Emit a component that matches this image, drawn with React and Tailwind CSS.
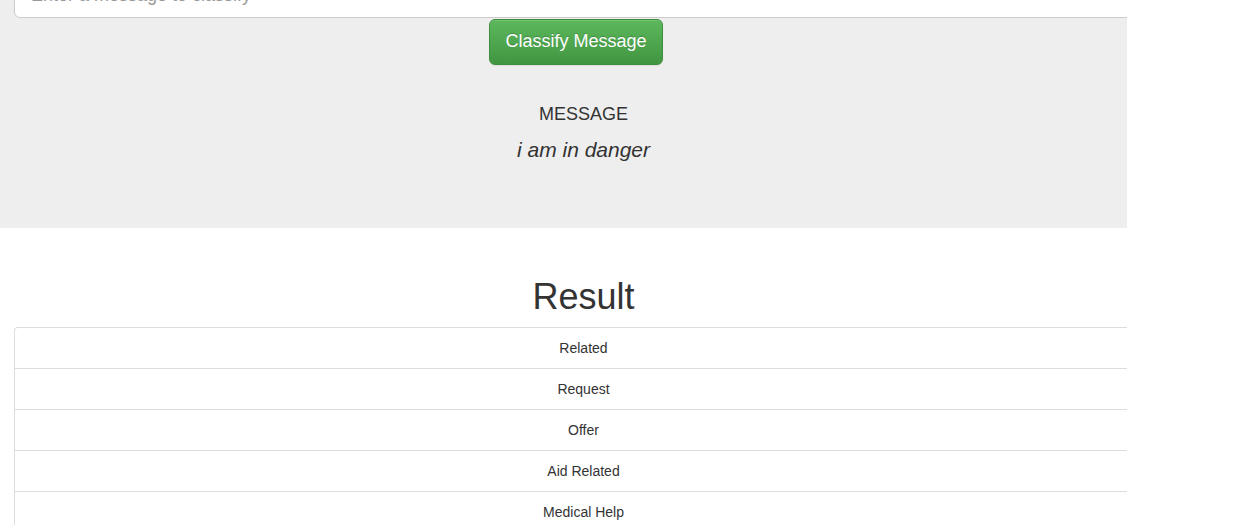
import React from "react";

const categories = ["Related", "Request", "Offer", "Aid Related", "Medical Help"];

export default function App() {
	return (
		<div className="w-[1127px] h-[525px] overflow-hidden bg-white text-[#333] font-['Liberation_Sans',Arial,sans-serif]">
			{/* Jumbotron */}
			<div className="flow-root bg-[#eeeeee] h-[228px]">
				<div className="ml-[14px] w-[1139px] -mt-[28px]">
					<input
						type="text"
						placeholder="Enter a message to classify"
						className="block w-full h-[46px] px-4 text-[18px] rounded-[6px] border border-[#ccc] bg-white shadow-[inset_0_1px_1px_rgba(0,0,0,0.075)] placeholder:text-[#999] outline-none"
					/>
					<div className="pl-[475px] pt-px">
						<button className="h-[46px] w-[174px] rounded-[6px] border border-[#3e8f3e] bg-[linear-gradient(to_bottom,#5cb85c_0%,#419641_100%)] text-white text-[18px] leading-[1.33] [text-shadow:0_-1px_0_rgba(0,0,0,0.2)] shadow-[inset_0_1px_0_rgba(255,255,255,0.15),0_1px_1px_rgba(0,0,0,0.075)]">
							Classify Message
						</button>
					</div>
					<div className="text-center mt-[39px]">
						<h4 className="text-[18px] leading-[20px]">MESSAGE</h4>
						<p className="text-[21px] italic leading-[29px] mt-[11px]">i am in danger</p>
					</div>
				</div>
			</div>

			{/* Result */}
			<div className="flow-root ml-[14px] w-[1139px]">
				<h1 className="text-[36px] leading-[40px] text-center mt-[49px] mb-[10px] font-normal">Result</h1>
				<ul className="text-[14px]">
					{categories.map((c, i) => (
						<li
							key={c}
							className={`text-center leading-[20px] py-[10px] border-t border-x border-[#ddd] bg-white ${i === 0 ? "rounded-t-[4px]" : ""}`}
						>
							{c}
						</li>
					))}
				</ul>
			</div>
		</div>
	);
}
